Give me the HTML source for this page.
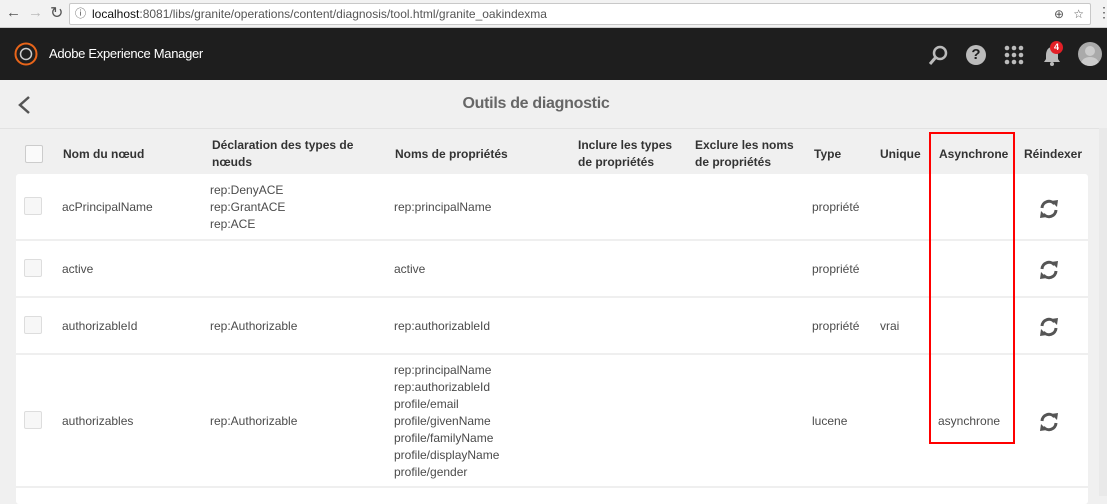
<!DOCTYPE html>
<html><head><meta charset="utf-8"><style>
*{margin:0;padding:0;box-sizing:border-box}
body{width:1107px;height:496px;overflow:hidden;background:#f0f0f0;font-family:"Liberation Sans",sans-serif;position:relative;color:#4b4b4b}
.a{position:absolute;white-space:nowrap}
.chrome{position:absolute;left:0;top:0;width:1107px;height:28px;background:#f2f2f2;border-bottom:1px solid #ccc}
.url{position:absolute;left:69px;top:3px;width:1022px;height:22px;background:#fff;border:1px solid #c8c8c8;border-radius:2px;font-size:12px;line-height:20px;padding-left:22px;color:#555}
.hdr{position:absolute;left:0;top:28px;width:1107px;height:52px;background:#1e1e1e}
.th{font-size:12px;font-weight:bold;color:#333;line-height:17px}
.card{position:absolute;left:16px;top:174px;width:1072px;height:330px;background:#fff;border-radius:3px}
.sep{position:absolute;left:16px;width:1072px;height:2px;background:#efefef}
.td{font-size:12px;line-height:17px;color:#4b4b4b}
.cb{position:absolute;width:18px;height:18px;border:1px solid #ddd;background:#f7f7f7;border-radius:2px}
</style></head><body>
<div class="chrome">
<div class="a" style="left:6px;top:4px;font-size:15px;color:#555">←</div>
<div class="a" style="left:28px;top:4px;font-size:15px;color:#bbb">→</div>
<div class="a" style="left:50px;top:3px;font-size:16px;color:#555">↻</div>
<div class="url"><span style="position:absolute;left:5px;top:0;font-size:11px">ⓘ</span><span style="color:#111">localhost</span>:8081/libs/granite/operations/content/diagnosis/tool.html/granite_oakindexma<span style="position:absolute;right:26px;top:0;color:#555">⊕</span><span style="position:absolute;right:6px;top:0;color:#555">☆</span></div>
<div class="a" style="left:1097px;top:4px;font-size:14px;color:#555">⋮</div>
</div>
<div class="hdr">
<svg class="a" style="left:14px;top:14px" width="24" height="24"><circle cx="12" cy="12" r="10.5" fill="none" stroke="#e8651a" stroke-width="2"/><circle cx="12" cy="12" r="5.5" fill="none" stroke="#ccc" stroke-width="1.5"/></svg>
<div class="a" style="left:49px;top:18px;font-size:13px;letter-spacing:-0.3px;color:#fff">Adobe Experience Manager</div>
<svg class="a" style="left:928px;top:16px" width="22" height="22"><circle cx="12" cy="9" r="6" fill="none" stroke="#bbb" stroke-width="2.5"/><line x1="8" y1="13" x2="2" y2="20" stroke="#bbb" stroke-width="3"/></svg>
<div class="a" style="left:966px;top:17px;width:20px;height:20px;border-radius:50%;background:#bbb;color:#1e1e1e;font-weight:bold;font-size:15px;text-align:center;line-height:20px">?</div>
<svg class="a" style="left:1004px;top:17px" width="20" height="20" fill="#bbb"><circle cx="3" cy="3" r="2.3"/><circle cx="10" cy="3" r="2.3"/><circle cx="17" cy="3" r="2.3"/><circle cx="3" cy="10" r="2.3"/><circle cx="10" cy="10" r="2.3"/><circle cx="17" cy="10" r="2.3"/><circle cx="3" cy="17" r="2.3"/><circle cx="10" cy="17" r="2.3"/><circle cx="17" cy="17" r="2.3"/></svg>
<svg class="a" style="left:1043px;top:18px" width="18" height="20" fill="#bbb"><path d="M9 1C5 1 3 5 3 9V13L1 16H17L15 13V9C15 5 13 1 9 1Z"/><circle cx="9" cy="18" r="2"/></svg>
<div class="a" style="left:1050px;top:13px;width:13px;height:13px;border-radius:50%;background:#e21f26;color:#fff;font-size:9px;font-weight:bold;text-align:center;line-height:13px">4</div>
<div class="a" style="left:1078px;top:14px;width:24px;height:24px;border-radius:50%;background:#aaa;overflow:hidden"><div class="a" style="left:7px;top:4px;width:10px;height:10px;border-radius:50%;background:#ccc"></div><div class="a" style="left:3px;top:15px;width:18px;height:14px;border-radius:50%;background:#ccc"></div></div>
</div>
<svg class="a" style="left:16px;top:95px" width="16" height="20"><path d="M13 2L4 10L13 18" fill="none" stroke="#555" stroke-width="2.5"/></svg>
<div class="a" style="left:0;top:95px;width:1072px;text-align:center;font-size:16px;font-weight:bold;letter-spacing:-0.3px;color:#666">Outils de diagnostic</div>
<div class="a" style="left:0;top:128px;width:1107px;height:1px;background:#e2e2e2"></div>

<div class="cb" style="left:25px;top:145px;background:#fafafa;border-color:#ccc"></div>
<div class="a th" style="left:63px;top:146px">Nom du nœud</div>
<div class="a th" style="left:212px;top:137px">Déclaration des types de<br>nœuds</div>
<div class="a th" style="left:395px;top:146px">Noms de propriétés</div>
<div class="a th" style="left:578px;top:137px">Inclure les types<br>de propriétés</div>
<div class="a th" style="left:695px;top:137px">Exclure les noms<br>de propriétés</div>
<div class="a th" style="left:814px;top:146px">Type</div>
<div class="a th" style="left:880px;top:146px">Unique</div>
<div class="a th" style="left:939px;top:146px">Asynchrone</div>
<div class="a th" style="left:1024px;top:146px">Réindexer</div>

<div class="card"></div>
<div class="sep" style="top:239px"></div>
<div class="sep" style="top:296px"></div>
<div class="sep" style="top:353px"></div>
<div class="sep" style="top:486px"></div>

<div class="cb" style="left:24px;top:197px"></div>
<div class="a td" style="left:62px;top:199px">acPrincipalName</div>
<div class="a td" style="left:210px;top:182px">rep:DenyACE<br>rep:GrantACE<br>rep:ACE</div>
<div class="a td" style="left:394px;top:199px">rep:principalName</div>
<div class="a td" style="left:812px;top:199px">propriété</div>

<div class="cb" style="left:24px;top:259px"></div>
<div class="a td" style="left:62px;top:261px">active</div>
<div class="a td" style="left:394px;top:261px">active</div>
<div class="a td" style="left:812px;top:261px">propriété</div>

<div class="cb" style="left:24px;top:316px"></div>
<div class="a td" style="left:62px;top:318px">authorizableId</div>
<div class="a td" style="left:210px;top:318px">rep:Authorizable</div>
<div class="a td" style="left:394px;top:318px">rep:authorizableId</div>
<div class="a td" style="left:812px;top:318px">propriété</div>
<div class="a td" style="left:880px;top:318px">vrai</div>

<div class="cb" style="left:24px;top:411px"></div>
<div class="a td" style="left:62px;top:413px">authorizables</div>
<div class="a td" style="left:210px;top:413px">rep:Authorizable</div>
<div class="a td" style="left:394px;top:362px">rep:principalName<br>rep:authorizableId<br>profile/email<br>profile/givenName<br>profile/familyName<br>profile/displayName<br>profile/gender</div>
<div class="a td" style="left:812px;top:413px">lucene</div>
<div class="a td" style="left:938px;top:413px">asynchrone</div>

<svg class="a" style="left:1039px;top:199px" width="20" height="20" viewBox="0 0 20 20"><g fill="none" stroke="#555" stroke-width="3"><path d="M3 9A7 7 0 0 1 15.5 5"/><path d="M17 11A7 7 0 0 1 4.5 15"/></g><path d="M12 2L19 1L18 8Z" fill="#555"/><path d="M8 18L1 19L2 12Z" fill="#555"/></svg>
<svg class="a" style="left:1039px;top:260px" width="20" height="20" viewBox="0 0 20 20"><g fill="none" stroke="#555" stroke-width="3"><path d="M3 9A7 7 0 0 1 15.5 5"/><path d="M17 11A7 7 0 0 1 4.5 15"/></g><path d="M12 2L19 1L18 8Z" fill="#555"/><path d="M8 18L1 19L2 12Z" fill="#555"/></svg>
<svg class="a" style="left:1039px;top:317px" width="20" height="20" viewBox="0 0 20 20"><g fill="none" stroke="#555" stroke-width="3"><path d="M3 9A7 7 0 0 1 15.5 5"/><path d="M17 11A7 7 0 0 1 4.5 15"/></g><path d="M12 2L19 1L18 8Z" fill="#555"/><path d="M8 18L1 19L2 12Z" fill="#555"/></svg>
<svg class="a" style="left:1039px;top:412px" width="20" height="20" viewBox="0 0 20 20"><g fill="none" stroke="#555" stroke-width="3"><path d="M3 9A7 7 0 0 1 15.5 5"/><path d="M17 11A7 7 0 0 1 4.5 15"/></g><path d="M12 2L19 1L18 8Z" fill="#555"/><path d="M8 18L1 19L2 12Z" fill="#555"/></svg>

<div class="a" style="left:1099px;top:128px;width:8px;height:368px;background:#e9e9e9"></div>
<div class="a" style="left:929px;top:132px;width:86px;height:312px;border:2px solid #f00"></div>
</body></html>
